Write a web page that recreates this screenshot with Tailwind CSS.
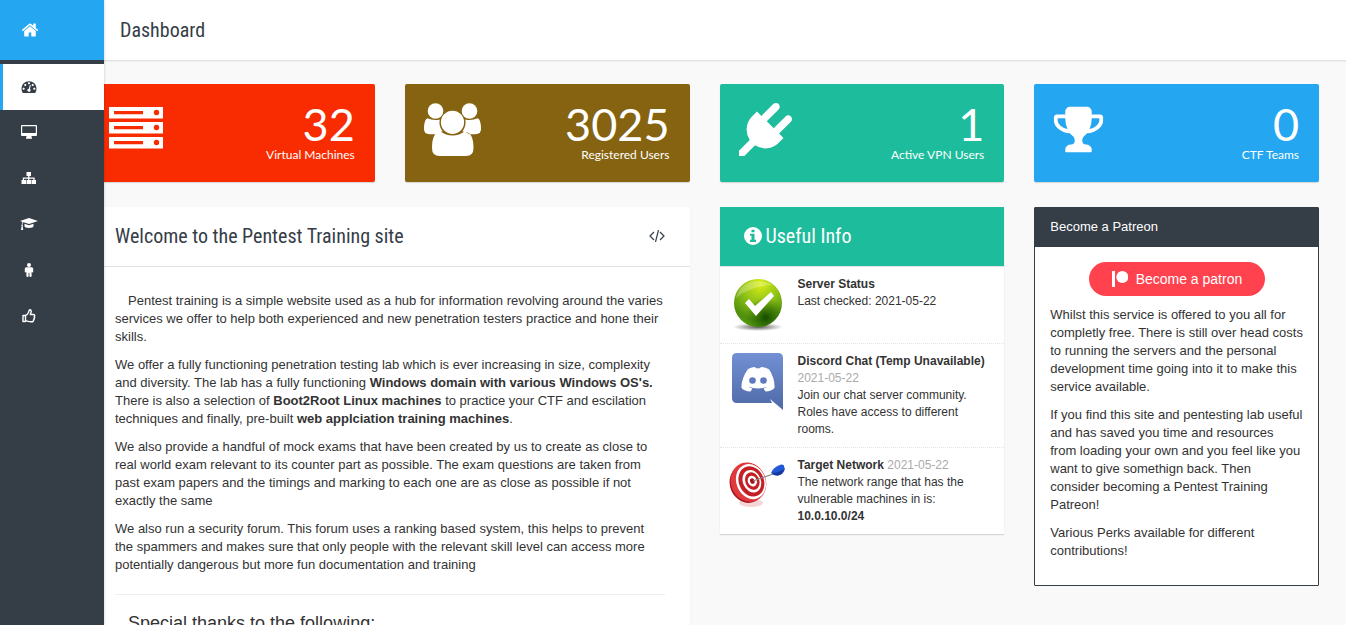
<!DOCTYPE html>
<html lang="en">
<head>
    <meta charset="UTF-8">
    <meta name="viewport" content="width=device-width, initial-scale=1.0">
    <title>Pentest Training - Dashboard</title>
    <script src="https://cdn.jsdelivr.net/npm/@tailwindcss/browser@4"></script>
</head>
<body class="bg-[#f9f9f9] text-[#333] text-[13px] leading-[18px] font-['Liberation_Sans',Arial,sans-serif] min-h-screen overflow-x-hidden">

    <!-- Sidebar -->
    <aside class="fixed inset-y-0 left-0 z-10 w-[104px] bg-[#353d47] shadow-[0_0_3px_rgba(0,0,0,0.2)]">
        <a href="#" aria-label="Home" class="flex items-center h-[60px] pl-[21px] bg-[#24a6f1] text-white">
            <svg class="size-[18px]" viewBox="0 0 1792 1792" fill="currentColor"><path d="M1472 992v480q0 26-19 45t-45 19h-384v-384h-256v384h-384q-26 0-45-19t-19-45v-480q0-1 .5-3t.5-3l575-474 575 474q1 2 1 6zm223-69l-62 74q-8 9-21 11h-3q-13 0-21-7l-692-577-692 577q-12 8-24 7-13-2-21-11l-62-74q-8-10-7-23.5t11-21.5l719-599q32-26 76-26t76 26l244 204v-195q0-14 9-23t23-9h192q14 0 23 9t9 23v408l219 182q10 8 11 21.5t-7 23.5z"/></svg>
        </a>
        <nav class="pt-1 text-white">
            <a href="#" aria-label="Dashboard" class="flex items-center h-[46px] pl-[18px] pb-[2px] border-l-3 border-[#24a6f1] bg-white text-[#353d47]">
                <svg class="w-4 h-[15px]" viewBox="0 0 1792 1792" fill="currentColor"><path d="M384 1152q0-53-37.5-90.5t-90.5-37.5-90.5 37.5-37.5 90.5 37.5 90.5 90.5 37.5 90.5-37.5 37.5-90.5zm192-448q0-53-37.5-90.5t-90.5-37.5-90.5 37.5-37.5 90.5 37.5 90.5 90.5 37.5 90.5-37.5 37.5-90.5zm428 481l101-382q6-26-7.5-48.5t-38.5-29.5-48 6.5-30 39.5l-101 382q-60 5-107 43.5t-63 98.5q-20 77 20 146t117 89 146-20 89-117q16-60-6-117t-72-91zm660-33q0-53-37.5-90.5t-90.5-37.5-90.5 37.5-37.5 90.5 37.5 90.5 90.5 37.5 90.5-37.5 37.5-90.5zm-640-640q0-53-37.5-90.5t-90.5-37.5-90.5 37.5-37.5 90.5 37.5 90.5 90.5 37.5 90.5-37.5 37.5-90.5zm448 192q0-53-37.5-90.5t-90.5-37.5-90.5 37.5-37.5 90.5 37.5 90.5 90.5 37.5 90.5-37.5 37.5-90.5zm320 448q0 261-141 483-19 29-54 29h-1402q-35 0-54-29-141-221-141-483 0-182 71-348t191-286 286-191 348-71 348 71 286 191 191 286 71 348z"/></svg>
            </a>
            <a href="#" aria-label="Machines" class="flex items-center h-[46px] pl-[21px] pb-[2px]">
                <svg class="w-4 h-[14px]" viewBox="0 0 16 14" fill="currentColor"><path fill-rule="evenodd" d="M1 0h14a1 1 0 0 1 1 1v9a1 1 0 0 1-1 1h-4.500v1l.5 1v.7H5V13l.5-1v-1H1a1 1 0 0 1-1-1V1a1 1 0 0 1 1-1zm.2 1.200v6.800h13.600V1.200z"/></svg>
            </a>
            <a href="#" aria-label="Network" class="flex items-center h-[46px] pl-[21px] pb-[2px]">
                <svg class="w-4 h-[14px]" viewBox="0 0 16 14" fill="currentColor"><path d="M5.500 1h4.500v4H8.400v1.500h5.300v2.500h1.300v4h-4.500V9h1.900V7.700H8.400V9h1.600v4H5.500V9h1.600V7.700H3V9h2v4H.5V9h1.300V6.500h5.300V5H5.500z"/></svg>
            </a>
            <a href="#" aria-label="Training" class="flex items-center h-[46px] pl-5 pb-[2px]">
                <svg class="w-[18px] h-[14px]" viewBox="0 0 18 14" fill="currentColor"><path d="M9 1l9 3-9 3-5.500-1.800q-1 .6-1.100 2.600.7.500.3 1.400L3.200 13H1l.6-3.800q-.6-.9.1-1.500.1-1.800.8-2.800L0 4zM4.500 6.700L9 8.200l4.500-1.500v2.600Q13 11 9 11t-4.500-1.700z"/></svg>
            </a>
            <a href="#" aria-label="Profile" class="flex items-center h-[46px] pl-[21px] pb-[2px]">
                <svg class="w-4 h-[14px]" viewBox="0 0 16 14" fill="currentColor"><circle cx="8" cy="2" r="2"/><path d="M5.300 4.200h5.400q1.500 0 1.500 1.500v3.100q0 .8-.8.800t-.8-.8V6.300v6.800q0 .9-1.100.9t-1.100-.9V9.700h-.8v3.400q0 .9-1.100.9t-1.100-.9V6.300v2.500q0 .8-.8.800t-.8-.8V5.700q0-1.500 1.500-1.500z"/></svg>
            </a>
            <a href="#" aria-label="Thanks" class="flex items-center h-[46px] pl-[21px] pb-[2px]">
                <svg class="w-4 h-[14px]" viewBox="0 0 16 14" fill="none" stroke="currentColor" stroke-width="1.400" stroke-linejoin="round"><path d="M4.500 6.500H2v6h2.500M4.500 6.500C6 6 7 4.500 7.500 3.500 8 2.500 7.700 1 8.800.8c1.400-.1 1.700 1.500 1.200 2.700L9.300 5.500h3c1.500 0 1.700 1.500.9 2 .7.600.5 1.600-.3 1.900.5.700.2 1.500-.5 1.800.2 1.100-.5 1.600-1.600 1.600-2.800.1-4-.5-6.300-1z"/></svg>
            </a>
        </nav>
    </aside>

    <header class="flex items-center h-[61px] pl-[120px] bg-white border-b border-[#e4e4e4] shadow-[0_1px_1px_rgba(0,0,0,0.04)]">
        <h1 class="text-[20px] leading-6 font-[370] text-[#353d47] font-['Roboto_Condensed','Liberation_Sans_Narrow',sans-serif]">Dashboard</h1>
    </header>

    <!-- The first column runs under the sidebar by 14px -->
    <main class="pl-[90px] pr-[27px] pt-[23px]">
        <section class="grid grid-cols-4 gap-[30px] mb-[25px] text-white font-['Lato',sans-serif]">
            <div class="flex justify-between h-[98px] pl-[19px] pr-5 pt-[19px] rounded-[2px] bg-[#f92b00] shadow-[0_1px_1px_rgba(0,0,0,0.15)]">
                <svg class="w-[54px] h-[53px]" viewBox="0 0 54 53" fill="currentColor"><path fill-rule="evenodd" d="M0 4h54v11.500H0zM5 8v3.200h29V8zM47.500 6.800a2.700 2.700 0 1 0 0 5.400 2.700 2.700 0 0 0 0-5.400zM0 19h54v11.500H0zM5 23v3.200h29V23zM47.500 21.800a2.700 2.700 0 1 0 0 5.400 2.700 2.700 0 0 0 0-5.400zM0 34h54v11.500H0zM5 38v3.200h29V38zM47.500 36.800a2.700 2.700 0 1 0 0 5.400 2.700 2.700 0 0 0 0-5.400z"/></svg>
                <div class="text-right">
                    <div class="text-[45px] leading-[42px]">32</div>
                    <div class="text-xs leading-5">Virtual Machines</div>
                </div>
            </div>
            <div class="flex justify-between h-[98px] pl-[19px] pr-5 pt-[19px] rounded-[2px] bg-[#856310] shadow-[0_1px_1px_rgba(0,0,0,0.15)]">
                <svg class="w-[57px] h-[53px]" viewBox="0 0 57 53" fill="currentColor"><circle cx="11.500" cy="8" r="7.800"/><circle cx="45.500" cy="8" r="7.800"/><circle cx="28.500" cy="19.300" r="11.600"/><path d="M3.500 15.200Q7 17 11.500 17q2.500 0 4.200-.6-1.200 7 3 11.800-4.500.3-7 3H5.500Q0 31.200 0 26q0-10 3.500-10.800zM53.500 15.200Q50 17 45.500 17q-2.500 0-4.200-.6 1.200 7-3 11.800 4.500.3 7 3h6.200q5.500 0 5.500-5.200 0-10-3.500-10.800zM17 28.800q4.500 3.700 11.500 3.700T40 28.800q9.500 0 9.500 16.200 0 8-7.500 8H15.500Q8 53 8 45q0-16.200 9-16.200z"/></svg>
                <div class="text-right">
                    <div class="text-[45px] leading-[42px]">3025</div>
                    <div class="text-xs leading-5">Registered Users</div>
                </div>
            </div>
            <div class="flex justify-between h-[98px] pl-[19px] pr-5 pt-[19px] rounded-[2px] bg-[#1dbc9c] shadow-[0_1px_1px_rgba(0,0,0,0.15)]">
                <svg class="size-[53px]" viewBox="0 0 1792 1792" fill="currentColor"><path d="M1755 453q37 38 37 90.500t-37 90.500l-401 400 150 150-160 160q-163 163-389.500 186.500t-411.500-100.500l-362 362h-181v-181l362-362q-124-185-100.500-411.500t186.500-389.500l160-160 150 150 400-401q38-37 91-37t90 37 37 90.500-37 90.500l-400 401 234 234 401-400q38-37 91-37t90 37z"/></svg>
                <div class="text-right">
                    <div class="text-[45px] leading-[42px]">1</div>
                    <div class="text-xs leading-5">Active VPN Users</div>
                </div>
            </div>
            <div class="flex justify-between h-[98px] pl-[19px] pr-5 pt-[19px] rounded-[2px] bg-[#24a6f1] shadow-[0_1px_1px_rgba(0,0,0,0.15)]">
                <svg class="w-[51px] h-[53px]" viewBox="32 0 1728 1792" fill="currentColor"><path d="M522 883q-74-162-74-371h-256v96q0 78 94.500 162t235.500 113zm1078-275v-96h-256q0 209-74 371 141-29 235.500-113t94.500-162zm128-128v128q0 71-41.500 143t-112 130-173 97.500-215.500 44.500q-42 54-95 95-38 34-52.500 72.500t-14.500 89.500q0 54 30.500 91t97.500 37q75 0 133.500 45.500t58.500 114.500v64q0 14-9 23t-23 9h-832q-14 0-23-9t-9-23v-64q0-69 58.500-114.500t133.500-45.500q67 0 97.500-37t30.500-91q0-51-14.500-89.500t-52.500-72.500q-53-41-95-95-113-5-215.500-44.500t-173-97.500-112-130-41.500-143v-128q0-40 28-68t68-28h288v-96q0-66 47-113t113-47h576q66 0 113 47t47 113v96h288q40 0 68 28t28 68z"/></svg>
                <div class="text-right">
                    <div class="text-[45px] leading-[42px]">0</div>
                    <div class="text-xs leading-5">CTF Teams</div>
                </div>
            </div>
        </section>

        <section class="grid grid-cols-4 gap-[30px] items-start">
            <!-- Welcome -->
            <article class="col-span-2 bg-white shadow-[0_1px_1px_rgba(0,0,0,0.1)]">
                <div class="flex items-center justify-between h-[60px] px-[25px] pb-[2px] border-b border-[#e2e2e4]">
                    <h2 class="text-[20px] leading-6 font-[370] text-[#353d47] font-['Roboto_Condensed','Liberation_Sans_Narrow',sans-serif]">Welcome to the Pentest Training site</h2>
                    <svg class="w-4 h-3" viewBox="0 0 16 12" fill="none" stroke="#353d47" stroke-width="1.200"><path d="M5 2L1 6l4 4M11 2l4 4-4 4M9.500 0l-3 12"/></svg>
                </div>
                <div class="px-[25px] py-[25px] space-y-[10px]">
                    <p class="indent-[13px]">Pentest training is a simple website used as a hub for information revolving around the varies services we offer to help both experienced and new penetration testers practice and hone their skills.</p>
                    <p>We offer a fully functioning penetration testing lab which is ever increasing in size, complexity and diversity. The lab has a fully functioning <b>Windows domain with various Windows OS's.</b> There is also a selection of <b>Boot2Root Linux machines</b> to practice your CTF and escilation techniques and finally, pre-built <b>web applciation training machines</b>.</p>
                    <p>We also provide a handful of mock exams that have been created by us to create as close to real world exam relevant to its counter part as possible. The exam questions are taken from past exam papers and the timings and marking to each one are as close as possible if not exactly the same</p>
                    <p>We also run a security forum. This forum uses a ranking based system, this helps to prevent the spammers and makes sure that only people with the relevant skill level can access more potentially dangerous but more fun documentation and training</p>
                    <hr class="mt-5 mb-[18px] border-[#eee]">
                    <h3 class="pl-[13px] text-[18px] leading-5">Special thanks to the following:</h3>
                </div>
            </article>

            <!-- Useful info -->
            <article class="bg-white text-xs leading-[17px] shadow-[0_1px_1px_rgba(0,0,0,0.15)]">
                <div class="flex items-center gap-1 h-[60px] px-6 pb-[2px] bg-[#1dbc9c] border-b border-[#e2e2e4] text-white">
                    <svg class="size-[18px]" viewBox="0 0 18 18" fill="currentColor"><path fill-rule="evenodd" d="M9 0a9 9 0 1 1 0 18A9 9 0 0 1 9 0zM7.500 2.700v2.600h3V2.700zM6 6.700v2h1.500v4H6v2.200h6v-2.200h-1.500v-6z"/></svg>
                    <h2 class="text-[20px] leading-6 font-[370] font-['Roboto_Condensed','Liberation_Sans_Narrow',sans-serif]">Useful Info</h2>
                </div>
                <ul>
                    <li class="flex gap-[10px] pl-2 pr-4 pt-[9px] pb-[9px] border-b border-dotted border-[#e3e3e3]">
                        <svg class="w-[60px] h-[58px] shrink-0" viewBox="0 2 60 58">
                            <defs>
                                <radialGradient id="ball" cx="0.55" cy="0.1" r="0.95"><stop offset="0" stop-color="#d9ee15"/><stop offset="0.45" stop-color="#8abf17"/><stop offset="0.8" stop-color="#4e8f0c"/><stop offset="1" stop-color="#5fa012"/></radialGradient>
                                <radialGradient id="dark" cx="0.66" cy="0.8" r="0.42"><stop offset="0" stop-color="#154d00"/><stop offset="1" stop-color="#2c6a00" stop-opacity="0"/></radialGradient>
                                <radialGradient id="shade"><stop offset="0" stop-color="#000" stop-opacity="0.65"/><stop offset="1" stop-color="#000" stop-opacity="0"/></radialGradient>
                            </defs>
                            <ellipse cx="30" cy="53" rx="25" ry="4" fill="url(#shade)"/>
                            <circle cx="30" cy="29" r="24" fill="url(#ball)"/>
                            <circle cx="30" cy="29" r="24" fill="url(#dark)"/>
                            <path d="M8 24Q12 9 27 7q12 0 17 4Q20 13 8 24z" fill="#fff" opacity="0.25"/>
                            <path d="M17 29l4-4 6 7L43 18l3 4-18 20z" fill="#fff"/>
                        </svg>
                        <div>
                            <b>Server Status</b>
                            <p>Last checked: 2021-05-22</p>
                        </div>
                    </li>
                    <li class="flex gap-[10px] pl-2 pr-4 pt-[9px] pb-[9px] border-b border-dotted border-[#e3e3e3]">
                        <svg class="size-[60px] shrink-0" viewBox="0 1 60 60">
                            <defs>
                                <linearGradient id="disc" x2="0" y2="1"><stop offset="0" stop-color="#7290d4"/><stop offset="1" stop-color="#4f69a6"/></linearGradient>
                            </defs>
                            <path d="M9 1h41q5 0 5 5v52L42 47l2 4H9q-5 0-5-5V6q0-5 5-5z" fill="url(#disc)"/>
                            <path d="M20 17q4-2 7-2l1 1.200h4l1-1.200q4 0 8 2.300 6 9 5.500 18.700-3 3.200-9 3.500l-2-3q2-.5 4-2-9.500 4-19 0 2 1.500 4 2l-2 3q-6-.3-9-3.500Q13 27 20 17z" fill="#fff"/>
                            <circle cx="24.500" cy="28.500" r="3.300" fill="#5f7bbd"/><circle cx="35.500" cy="28.500" r="3.300" fill="#5f7bbd"/>
                        </svg>
                        <div>
                            <b>Discord Chat (Temp Unavailable)</b>
                            <span class="text-[#aaa]">2021-05-22</span>
                            <p>Join our chat server community. Roles have access to different rooms.</p>
                        </div>
                    </li>
                    <li class="flex gap-[10px] pl-2 pr-4 pt-[9px] pb-[9px]">
                        <svg class="size-[60px] shrink-0" viewBox="0 2 60 60">
                            <ellipse cx="23" cy="48" rx="12" ry="4" fill="#c33" opacity="0.2"/>
                            <g transform="rotate(-22 22 27)">
                                <ellipse cx="18.500" cy="27.500" rx="17" ry="19.500" fill="#a8181c"/>
                                <ellipse cx="20.500" cy="26.500" rx="17.500" ry="20" fill="#e03a3e"/>
                                <ellipse cx="23" cy="27" rx="14.500" ry="18" fill="#fff"/>
                                <ellipse cx="23.500" cy="27" rx="12.500" ry="15.500" fill="#c31f24"/>
                                <ellipse cx="24" cy="27" rx="9" ry="11.500" fill="#fff"/>
                                <ellipse cx="24.500" cy="27" rx="7" ry="9" fill="#c31f24"/>
                                <ellipse cx="24.500" cy="27" rx="4.500" ry="5.500" fill="#fff"/>
                                <ellipse cx="24.500" cy="27" rx="2.200" ry="2.800" fill="#a01418"/>
                            </g>
                            <path d="M25 26l20-7" stroke="#888" stroke-width="1.200"/>
                            <path d="M43 18q2-6 10-8.500 4 0 3 2.500l1 1.500q-1 6-7 7-4 .5-7-2.500z" fill="#2159d8"/><path d="M44 18q6 0 12-4-1 5.500-6 6.500-4 .5-6-2.500z" fill="#163a9c"/>
                        </svg>
                        <div>
                            <b>Target Network</b>
                            <span class="text-[#aaa]">2021-05-22</span>
                            <p>The network range that has the vulnerable machines in is: <b>10.0.10.0/24</b></p>
                        </div>
                    </li>
                </ul>
            </article>

            <!-- Patreon -->
            <article class="bg-white border border-[#353d47] rounded-[1px]">
                <div class="flex items-center h-[39px] px-[15px] pb-[2px] bg-[#353d47] text-white">
                    <h2>Become a Patreon</h2>
                </div>
                <div class="px-[15px] pt-[15px] pb-[25px] space-y-[10px]">
                    <button type="button" class="flex items-center gap-2 mx-auto h-[34px] w-[176px] pl-[23px] rounded-full bg-[#ff424d] text-white text-[14px] font-medium">
                        <svg class="w-4 h-[18px]" viewBox="0 0 16 18" fill="currentColor"><path d="M0 1h3v16H0z"/><circle cx="10.300" cy="7" r="6"/></svg>
                        Become a patron
                    </button>
                    <p>Whilst this service is offered to you all for completly free. There is still over head costs to running the servers and the personal development time going into it to make this service available.</p>
                    <p>If you find this site and pentesting lab useful and has saved you time and resources from loading your own and you feel like you want to give somethign back. Then consider becoming a Pentest Training Patreon!</p>
                    <p>Various Perks available for different contributions!</p>
                </div>
            </article>
        </section>
    </main>
</body>
</html>
